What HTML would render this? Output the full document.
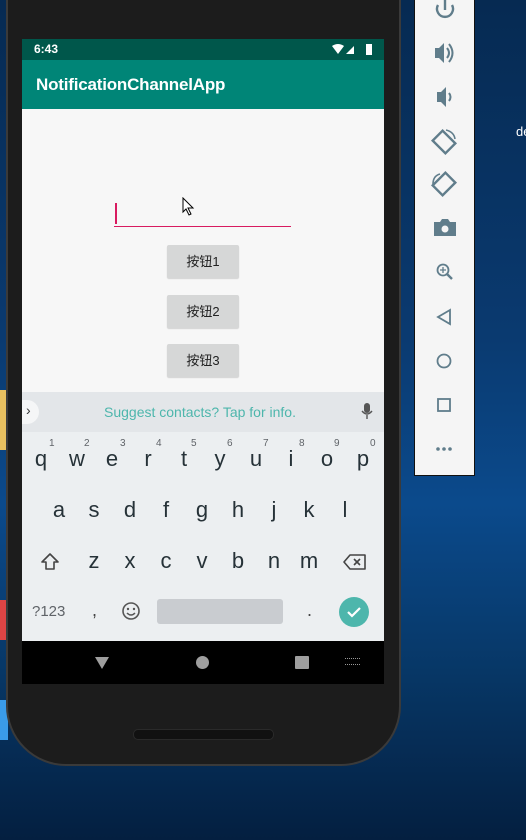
<!DOCTYPE html>
<html><head><meta charset="utf-8"><style>
*{margin:0;padding:0;box-sizing:border-box}
body{width:526px;height:840px;overflow:hidden;position:relative;background:linear-gradient(180deg,#062a52 0%,#0a3a70 40%,#0b4a8c 60%,#073766 80%,#041f40 100%);font-family:"Liberation Sans","Noto Sans CJK SC",sans-serif}
.a{position:absolute}
.phone{left:6px;top:-30px;width:395px;height:796px;background:#1c1c1c;border-radius:0 0 60px 60px;border:2px solid #3a3a3a}
.k{position:absolute;font-size:22px;color:#263238;width:30px;text-align:center;transform:translateX(-50%)}
.n{position:absolute;font-size:10px;color:#5f6368}
.btn{position:absolute;left:167px;width:72px;height:33px;background:#d6d7d7;border-radius:2px;font-size:13px;color:#222;text-align:center;line-height:33px;box-shadow:0 1px 1px rgba(0,0,0,.15)}
</style></head><body>
<div class="a" style="left:0;top:390px;width:8px;height:60px;background:#e8c060"></div>
<div class="a" style="left:0;top:600px;width:8px;height:40px;background:#d44"></div>
<div class="a" style="left:0;top:700px;width:8px;height:40px;background:#3a9be8"></div>
<div class="a phone"></div>
<div class="a" style="left:22px;top:39px;width:362px;height:21px;background:#00574b"></div>
<div class="a" style="left:34px;top:42px;font-size:12px;color:#fff;font-weight:bold">6:43</div>
<svg class="a" style="left:332px;top:43px" width="44" height="14"><path d="M0 3Q6 -1 12 3L6 11Z" fill="#fff"/><path d="M14 11L22 3V11Z" fill="#fff"/><rect x="34" y="1" width="6" height="11" fill="#fff"/></svg>
<div class="a" style="left:22px;top:60px;width:362px;height:49px;background:#008577"></div>
<div class="a" style="left:36px;top:75px;font-size:17px;color:#fff;font-weight:bold;letter-spacing:-0.2px">NotificationChannelApp</div>
<div class="a" style="left:22px;top:109px;width:362px;height:283px;background:#f7f7f7"></div>
<div class="a" style="left:115px;top:203px;width:2px;height:21px;background:#d81b60"></div>
<div class="a" style="left:114px;top:226px;width:177px;height:1px;background:#d81b60"></div>
<svg class="a" style="left:182px;top:197px" width="14" height="20"><path d="M1 1V15L4 12L7 18L9 17L6 11H11Z" fill="#fff" stroke="#000" stroke-width="1"/></svg>
<div class="btn" style="top:245px">按钮1</div>
<div class="btn" style="top:295px">按钮2</div>
<div class="btn" style="top:344px">按钮3</div>
<div class="a" style="left:22px;top:392px;width:362px;height:40px;background:#e3e6e9"></div>
<div class="a" style="left:22px;top:432px;width:362px;height:209px;background:#eceff1"></div>
<div class="a" style="left:22px;top:400px;width:17px;height:24px;background:#f5f6f7;border-radius:0 12px 12px 0"></div>
<div class="a" style="left:26px;top:402px;font-size:14px;color:#333">›</div>
<div class="a" style="left:104px;top:404px;font-size:14px;color:#4db6ac">Suggest contacts? Tap for info.</div>
<svg class="a" style="left:361px;top:403px" width="12" height="17"><rect x="3" y="0" width="6" height="10" rx="3" fill="#555"/><path d="M1 8Q6 14 11 8M6 12V16" stroke="#555" fill="none" stroke-width="1.4"/></svg>
<div class="k" style="left:41px;top:446px">q</div><div class="k" style="left:77px;top:446px">w</div><div class="k" style="left:112px;top:446px">e</div><div class="k" style="left:148px;top:446px">r</div><div class="k" style="left:184px;top:446px">t</div><div class="k" style="left:220px;top:446px">y</div><div class="k" style="left:256px;top:446px">u</div><div class="k" style="left:291px;top:446px">i</div><div class="k" style="left:327px;top:446px">o</div><div class="k" style="left:363px;top:446px">p</div>
<div class="n" style="left:49px;top:438px">1</div><div class="n" style="left:84px;top:438px">2</div><div class="n" style="left:120px;top:438px">3</div><div class="n" style="left:156px;top:438px">4</div><div class="n" style="left:191px;top:438px">5</div><div class="n" style="left:227px;top:438px">6</div><div class="n" style="left:263px;top:438px">7</div><div class="n" style="left:299px;top:438px">8</div><div class="n" style="left:334px;top:438px">9</div><div class="n" style="left:370px;top:438px">0</div>
<div class="k" style="left:59px;top:497px">a</div><div class="k" style="left:94px;top:497px">s</div><div class="k" style="left:130px;top:497px">d</div><div class="k" style="left:166px;top:497px">f</div><div class="k" style="left:202px;top:497px">g</div><div class="k" style="left:238px;top:497px">h</div><div class="k" style="left:274px;top:497px">j</div><div class="k" style="left:309px;top:497px">k</div><div class="k" style="left:345px;top:497px">l</div>
<svg class="a" style="left:40px;top:552px" width="20" height="20"><path d="M10 2L2 10H6V17H14V10H18Z" fill="none" stroke="#444" stroke-width="1.6" stroke-linejoin="round"/></svg>
<div class="k" style="left:94px;top:548px">z</div><div class="k" style="left:130px;top:548px">x</div><div class="k" style="left:166px;top:548px">c</div><div class="k" style="left:202px;top:548px">v</div><div class="k" style="left:238px;top:548px">b</div><div class="k" style="left:274px;top:548px">n</div><div class="k" style="left:309px;top:548px">m</div>
<svg class="a" style="left:343px;top:554px" width="24" height="16"><path d="M7 1H22V15H7L1 8Z" fill="none" stroke="#444" stroke-width="1.6" stroke-linejoin="round"/><path d="M11 5L17 11M17 5L11 11" stroke="#444" stroke-width="1.6"/></svg>
<div class="a" style="left:32px;top:603px;font-size:15px;color:#5f6368">?123</div>
<div class="a" style="left:92px;top:600px;font-size:18px;color:#444">,</div>
<svg class="a" style="left:121px;top:601px" width="20" height="20"><circle cx="10" cy="10" r="8" fill="none" stroke="#555" stroke-width="1.6"/><circle cx="7" cy="8" r="1.2" fill="#555"/><circle cx="13" cy="8" r="1.2" fill="#555"/><path d="M6 12Q10 16 14 12" fill="none" stroke="#555" stroke-width="1.5"/></svg>
<div class="a" style="left:157px;top:599px;width:126px;height:25px;background:#c9ccd0;border-radius:3px"></div>
<div class="a" style="left:307px;top:600px;font-size:18px;color:#444">.</div>
<div class="a" style="left:339px;top:597px;width:30px;height:30px;border-radius:50%;background:#4db6ac"></div>
<svg class="a" style="left:339px;top:597px" width="30" height="30"><path d="M9 15L13 19L21 11" fill="none" stroke="#fff" stroke-width="2.2"/></svg>
<div class="a" style="left:22px;top:641px;width:362px;height:43px;background:#000"></div>
<svg class="a" style="left:94px;top:656px" width="16" height="14"><path d="M1 1H15L8 13Z" fill="#9e9e9e"/></svg>
<div class="a" style="left:196px;top:656px;width:13px;height:13px;border-radius:50%;background:#9e9e9e"></div>
<div class="a" style="left:295px;top:656px;width:14px;height:13px;background:#9e9e9e;border-radius:1px"></div>
<div class="a" style="left:345px;top:658px;width:15px;height:7px;border-top:1px dotted #999;border-bottom:1px dotted #999"></div>
<div class="a" style="left:133px;top:729px;width:141px;height:11px;border-radius:5px;background:#111;border:1px solid #2a2a2a"></div>
<div class="a" style="left:414px;top:-2px;width:61px;height:478px;background:#f5f5f5;border:1px solid #111"></div>
<svg class="a" style="left:430px;top:0" width="30" height="470" fill="#607d8b" stroke="#607d8b">
<path d="M8 5A8 8 0 1 0 22 5" fill="none" stroke-width="2.4"/><path d="M15 0V10" stroke-width="2.4"/>
<path d="M5 48H9L14 43V63L9 58H5Z" stroke="none"/><path d="M17 48Q21 53 17 58M19 44Q26 53 19 62" fill="none" stroke-width="2"/>
<path d="M7 92H11L16 87V107L11 102H7Z" stroke="none"/><path d="M19 93Q22 97 19 101" fill="none" stroke-width="2"/>
<rect x="7" y="133" width="14" height="18" transform="rotate(-45 14 142)" fill="none" stroke-width="2.4"/><path d="M16 130Q24 132 25 139" fill="none" stroke-width="1.6"/>
<rect x="7" y="175" width="14" height="18" transform="rotate(45 14 184)" fill="none" stroke-width="2.4"/><path d="M3 184Q3 176 10 174" fill="none" stroke-width="1.6"/>
<path d="M4 222H10L12 219H18L20 222H26V236H4Z" stroke="none"/><circle cx="15" cy="229" r="3.5" fill="#f5f5f5" stroke="none"/>
<circle cx="13" cy="270" r="5.5" fill="none" stroke-width="1.8"/><path d="M17 274L22 279" stroke-width="2.4"/><path d="M13 267V273M10 270H16" stroke-width="1.3"/>
<path d="M20 310L8 317L20 324Z" fill="none" stroke-width="1.8"/>
<circle cx="14" cy="361" r="6.5" fill="none" stroke-width="1.8"/>
<rect x="8" y="399" width="12" height="12" fill="none" stroke-width="1.8"/>
<circle cx="8" cy="449" r="1.8" stroke="none"/><circle cx="14" cy="449" r="1.8" stroke="none"/><circle cx="20" cy="449" r="1.8" stroke="none"/>
</svg>
<div class="a" style="left:516px;top:124px;font-size:13px;color:#fff">de</div>
</body></html>
